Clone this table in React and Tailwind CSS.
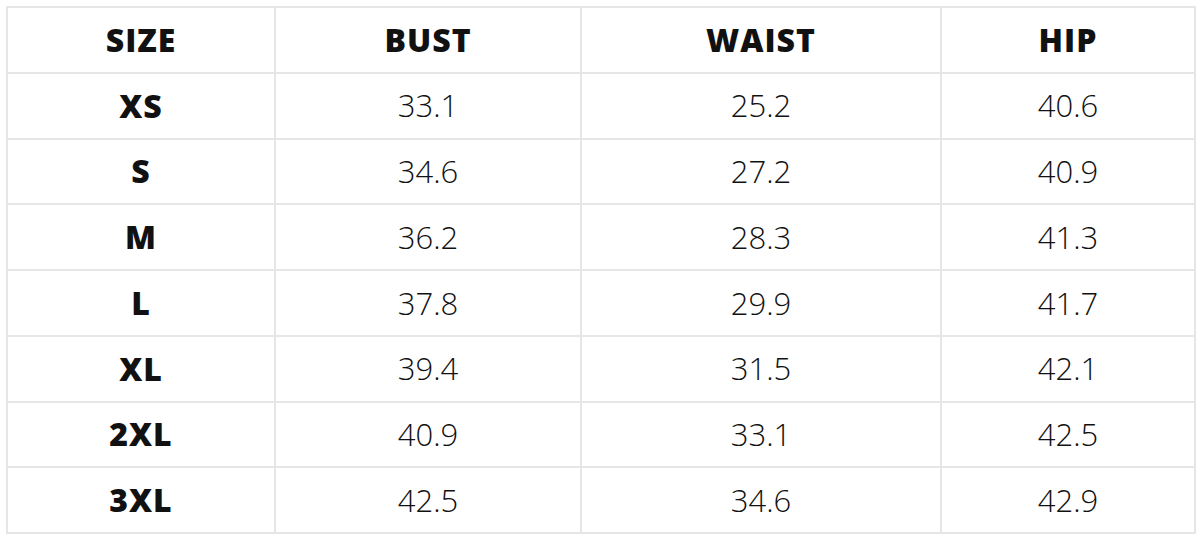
const rows = [
  ["XS", "33.1", "25.2", "40.6"],
  ["S", "34.6", "27.2", "40.9"],
  ["M", "36.2", "28.3", "41.3"],
  ["L", "37.8", "29.9", "41.7"],
  ["XL", "39.4", "31.5", "42.1"],
  ["2XL", "40.9", "33.1", "42.5"],
  ["3XL", "42.5", "34.6", "42.9"],
];

const headers = ["SIZE", "BUST", "WAIST", "HIP"];

export default function App() {
  return (
    <div className="w-[1200px] h-[538px] bg-white pl-[6px] pt-[6px] font-['Open_Sans',sans-serif] text-[#111]">
      <table className="border-collapse table-fixed w-[1188px]">
        <colgroup>
          <col className="w-[268px]" />
          <col className="w-[306px]" />
          <col className="w-[360px]" />
          <col className="w-[254px]" />
        </colgroup>
        <thead>
          <tr className="h-[65.75px]">
            {headers.map((h) => (
              <th
                key={h}
                className="border-2 border-[#e6e6e8] text-center font-extrabold text-[32px] tracking-[0.03em]"
              >
                {h}
              </th>
            ))}
          </tr>
        </thead>
        <tbody>
          {rows.map((r) => (
            <tr key={r[0]} className="h-[65.75px]">
              {r.map((c, i) => (
                <td
                  key={i}
                  className={`border-2 border-[#e6e6e8] text-center ${
                    i === 0 ? "font-extrabold text-[32px] tracking-[0.03em]" : "font-light text-[31px]"
                  }`}
                >
                  {c}
                </td>
              ))}
            </tr>
          ))}
        </tbody>
      </table>
    </div>
  );
}
